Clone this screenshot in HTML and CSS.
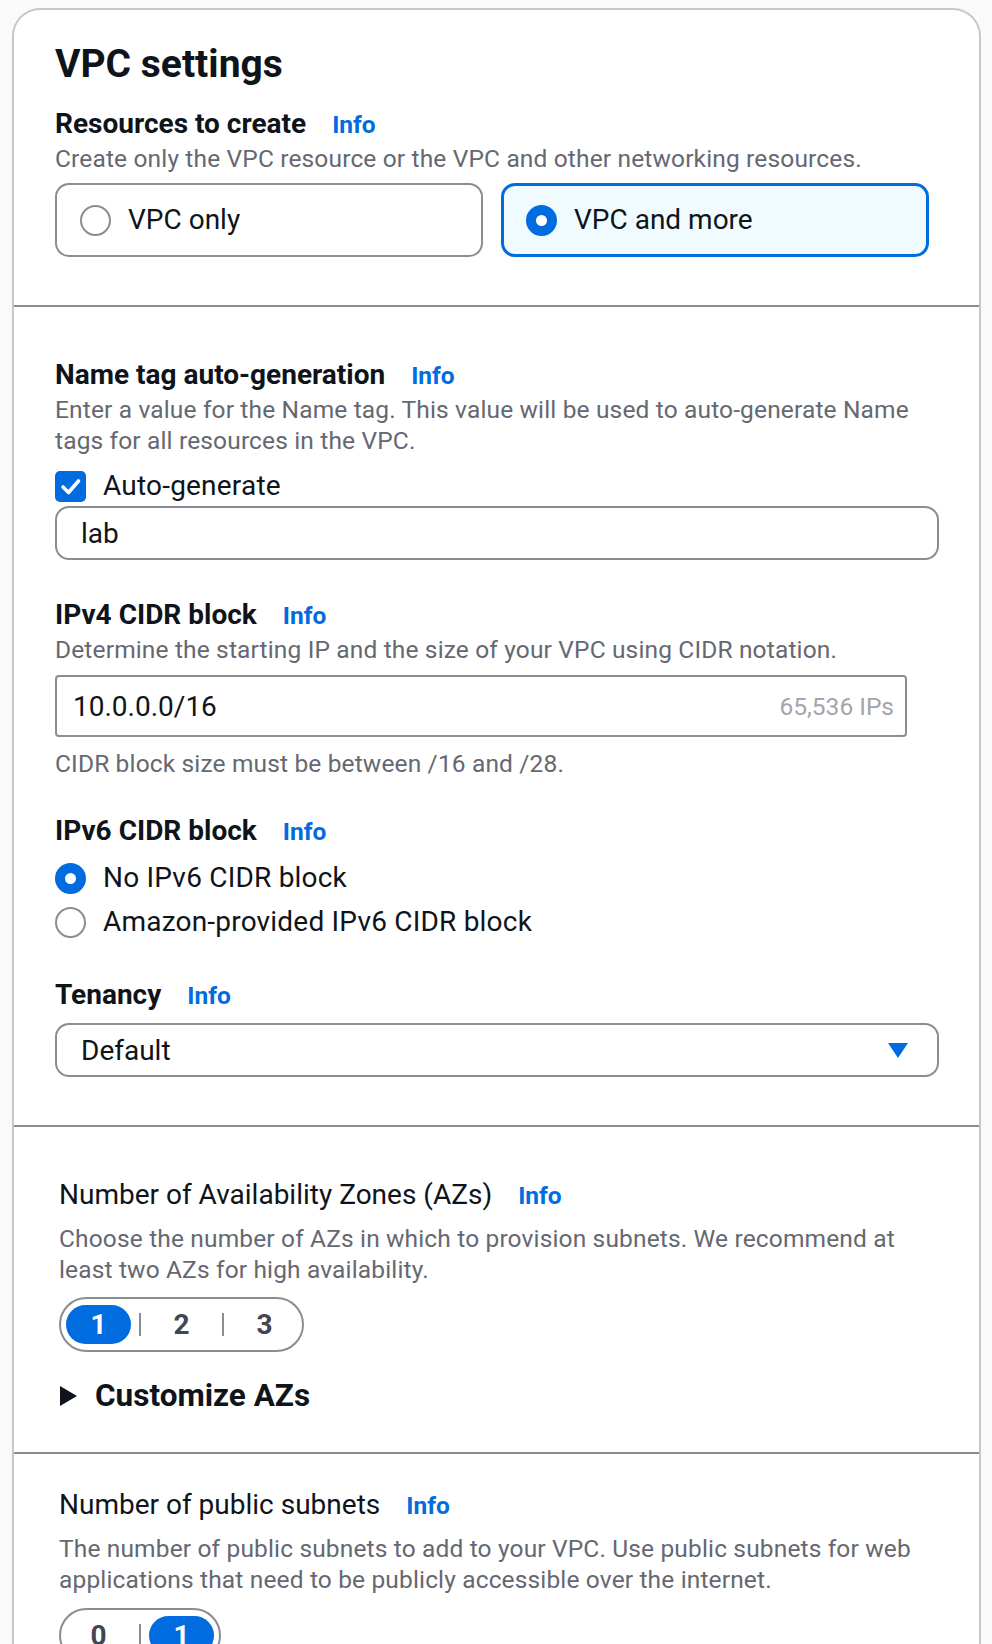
FILE: index.html
```html
<!DOCTYPE html>
<html lang="en">
<head>
<meta charset="utf-8">
<title>VPC settings</title>
<link rel="stylesheet" href="styles.css">
</head>
<body>
<div class="card">
  <section class="sec sec-first">
    <h2 class="card-title">VPC settings</h2>
    <div class="label-row"><span class="label">Resources to create</span><a class="info">Info</a></div>
    <p class="desc">Create only the VPC resource or the VPC and other networking resources.</p>
    <div class="tiles">
      <div class="tile"><span class="radio"></span><span class="tile-text">VPC only</span></div>
      <div class="tile tile-on"><span class="radio radio-on"></span><span class="tile-text">VPC and more</span></div>
    </div>
  </section>

  <section class="sec sec-main">
    <div class="label-row"><span class="label">Name tag auto-generation</span><a class="info">Info</a></div>
    <p class="desc">Enter a value for the Name tag. This value will be used to auto-generate Name<br>tags for all resources in the VPC.</p>
    <div class="check-row">
      <span class="checkbox"><svg width="31" height="31" viewBox="0 0 31 31"><path d="M8 16 L13.5 21.5 L23.5 10" fill="none" stroke="#fff" stroke-width="3.6" stroke-linecap="round" stroke-linejoin="round"/></svg></span>
      <span class="row-text">Auto-generate</span>
    </div>
    <div class="text-input">lab</div>

    <div class="label-row gap-36"><span class="label">IPv4 CIDR block</span><a class="info">Info</a></div>
    <p class="desc">Determine the starting IP and the size of your VPC using CIDR notation.</p>
    <div class="cidr-input"><span class="cidr-value">10.0.0.0/16</span><span class="cidr-count">65,536 IPs</span></div>
    <p class="desc hint">CIDR block size must be between /16 and /28.</p>

    <div class="label-row gap-33"><span class="label">IPv6 CIDR block</span><a class="info">Info</a></div>
    <div class="radio-list">
      <div class="radio-row"><span class="radio radio-on"></span><span class="row-text">No IPv6 CIDR block</span></div>
      <div class="radio-row"><span class="radio"></span><span class="row-text">Amazon-provided IPv6 CIDR block</span></div>
    </div>

    <div class="label-row gap-32"><span class="label">Tenancy</span><a class="info">Info</a></div>
    <div class="text-input select">
      <span>Default</span>
      <svg class="caret" width="20" height="15" viewBox="0 0 20 15"><polygon points="0,0 20,0 10,15" fill="#006ce0"/></svg>
    </div>
  </section>

  <section class="sec sec-azs">
    <div class="label-row"><span class="label label-normal">Number of Availability Zones (AZs)</span><a class="info">Info</a></div>
    <p class="desc desc-spaced">Choose the number of AZs in which to provision subnets. We recommend at<br>least two AZs for high availability.</p>
    <div class="seg">
      <span class="seg-item on">1</span><span class="seg-sep"></span>
      <span class="seg-item">2</span><span class="seg-sep"></span>
      <span class="seg-item">3</span>
    </div>
    <div class="expander">
      <svg class="exp-arrow" width="17" height="20" viewBox="0 0 17 20"><polygon points="0,0 17,10 0,20" fill="#0f141a"/></svg>
      <span class="exp-text">Customize AZs</span>
    </div>
  </section>

  <section class="sec sec-subnets">
    <div class="label-row"><span class="label label-normal">Number of public subnets</span><a class="info">Info</a></div>
    <p class="desc desc-spaced">The number of public subnets to add to your VPC. Use public subnets for web<br>applications that need to be publicly accessible over the internet.</p>
    <div class="seg seg-sub">
      <span class="seg-item">0</span><span class="seg-sep"></span>
      <span class="seg-item on">1</span>
    </div>
  </section>
</div>
</body>
</html>
```

FILE: styles.css
```css
* { box-sizing: border-box; }

html, body {
  margin: 0;
  padding: 0;
  background: #fafafa;
}

body {
  width: 992px;
  height: 1644px;
  overflow: hidden;
  font-family: Roboto, "Noto Sans", Arial, sans-serif;
  color: #0f141a;
}

.card {
  margin: 8px 11px 0 12px;
  background: #ffffff;
  border: 2px solid #c6c6cd;
  border-bottom: none;
  border-radius: 28px 28px 0 0;
  padding-bottom: 200px;
}

.sec {
  padding: 49px 40px 48px 41px;
  border-top: 2px solid #8c8c94;
}

.sec-first {
  padding-top: 30px;
  border-top: none;
}

.sec-azs {
  padding: 49px 40px 36px 45px;
}

.sec-subnets {
  padding: 32px 40px 40px 45px;
}

.card-title {
  margin: 0 0 17px;
  font-size: 39px;
  line-height: 48px;
  font-weight: 700;
}

.label-row {
  display: flex;
  align-items: baseline;
  height: 38px;
}

.label {
  font-size: 28px;
  line-height: 38px;
  font-weight: 700;
}

.label-normal {
  font-weight: 400;
}

.info {
  margin-left: 26px;
  font-size: 24.5px;
  line-height: 24px;
  font-weight: 700;
  color: #006ce0;
}

.gap-36 { margin-top: 36px; }
.gap-33 { margin-top: 33px; }
.gap-32 { margin-top: 32px; }

.desc {
  margin: 0;
  font-size: 24.5px;
  line-height: 31px;
  letter-spacing: 0.15px;
  color: #656871;
}

.desc-spaced {
  margin-top: 9px;
}

.hint {
  margin-top: 11px;
}

.tiles {
  display: grid;
  grid-template-columns: 428px 428px;
  column-gap: 18px;
  margin-top: 9px;
}

.tile {
  display: flex;
  align-items: center;
  height: 74px;
  padding-left: 23px;
  border: 2px solid #8c8c94;
  border-radius: 14px;
  background: #ffffff;
}

.tile-on {
  padding-left: 22px;
  border: 3px solid #006ce0;
  background: #f0fbff;
}

.radio {
  flex: none;
  width: 31px;
  height: 31px;
  border: 2px solid #8c8c94;
  border-radius: 50%;
  background: #ffffff;
}

.radio-on {
  border: 10px solid #006ce0;
}

.tile-text,
.row-text {
  margin-left: 17px;
  font-size: 28px;
  line-height: 36px;
}

.row-text {
  letter-spacing: 0.2px;
}

.check-row {
  display: flex;
  align-items: center;
  height: 36px;
  margin-top: 12px;
}

.checkbox {
  flex: none;
  display: flex;
  width: 31px;
  height: 31px;
  border-radius: 5px;
  background: #006ce0;
}

.text-input {
  display: flex;
  align-items: center;
  height: 54px;
  margin-top: 2px;
  padding-left: 24px;
  border: 2px solid #8c8c94;
  border-radius: 14px;
  font-size: 28px;
}

.cidr-input {
  display: flex;
  align-items: center;
  justify-content: space-between;
  width: 852px;
  height: 62px;
  margin-top: 10px;
  padding: 0 11px 0 16px;
  border: 2px solid #8c8c94;
  border-radius: 4px;
}

.cidr-value {
  font-size: 28px;
}

.cidr-count {
  font-size: 24.5px;
  color: #a4a4ad;
}

.radio-list {
  margin-top: 6px;
}

.radio-row {
  display: flex;
  align-items: center;
  height: 44px;
}

.select {
  justify-content: space-between;
  margin-top: 9px;
  padding-right: 29px;
}

.caret {
  display: block;
}

.seg {
  display: inline-flex;
  align-items: center;
  margin-top: 12px;
  padding: 6px 5px;
  border: 2px solid #8c8c94;
  border-radius: 30px;
}

.seg-sub {
  margin-top: 13px;
}

.seg-item {
  display: flex;
  align-items: center;
  justify-content: center;
  width: 65px;
  height: 39px;
  border-radius: 20px;
  font-size: 28px;
  font-weight: 700;
  color: #424650;
}

.seg-item.on {
  background: #006ce0;
  color: #ffffff;
}

.seg-sep {
  width: 2px;
  height: 23px;
  margin: 0 8px;
  background: #8c8c94;
}

.expander {
  display: flex;
  align-items: center;
  margin-top: 24px;
}

.exp-arrow {
  display: block;
  margin-left: 1px;
}

.exp-text {
  margin-left: 18px;
  font-size: 31.5px;
  line-height: 40px;
  font-weight: 700;
}
```
